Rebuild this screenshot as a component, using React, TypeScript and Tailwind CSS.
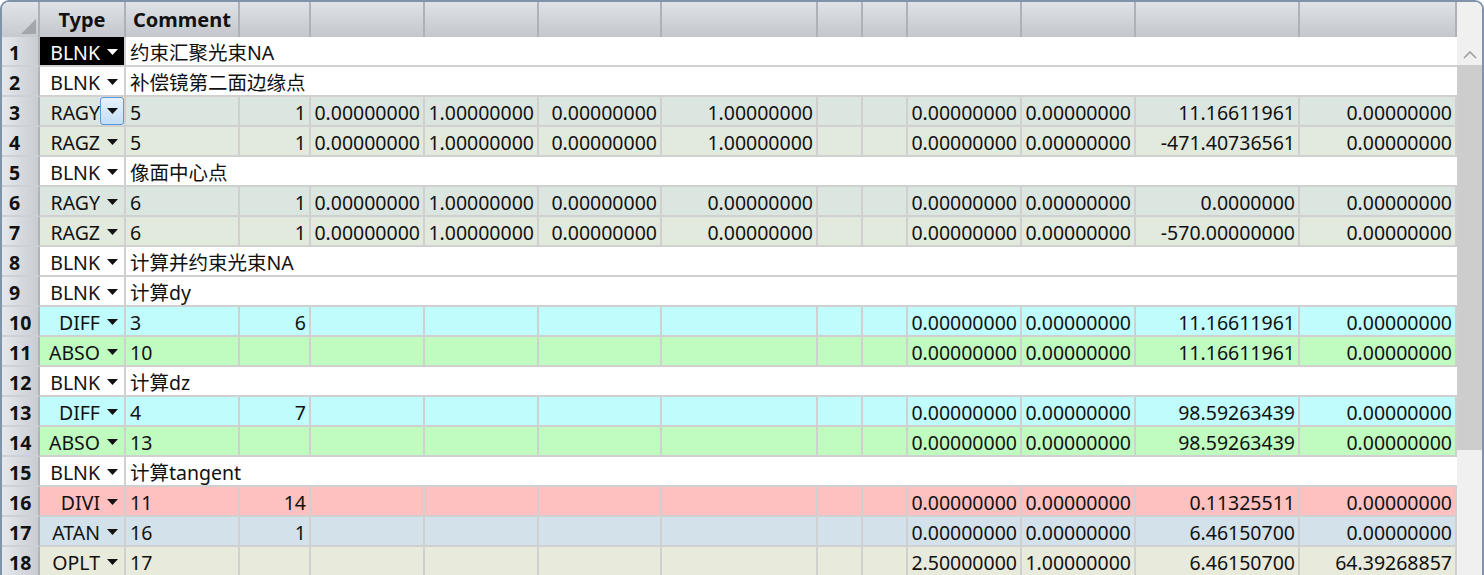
const widths = [
  "w-[114px]",
  "w-[71px]",
  "w-[114px]",
  "w-[114px]",
  "w-[123px]",
  "w-[156px]",
  "w-[45px]",
  "w-[45px]",
  "w-[114px]",
  "w-[114px]",
  "w-[164px]",
  "w-[157px]",
];

const rowBg: Record<string, string> = {
  BLNK: "bg-white",
  RAGY: "bg-[#dce6e0]",
  RAGZ: "bg-[#e2e9dd]",
  DIFF: "bg-[#c0fcfc]",
  ABSO: "bg-[#c0fcc0]",
  DIVI: "bg-[#ffc0c0]",
  ATAN: "bg-[#d3e2ea]",
  OPLT: "bg-[#e8eadb]",
};

const Z = "0.00000000";
const O = "1.00000000";

type Row = { type: string; comment?: string; cells?: string[] };

const rows: Row[] = [
  { type: "BLNK", comment: "约束汇聚光束NA" },
  { type: "BLNK", comment: "补偿镜第二面边缘点" },
  { type: "RAGY", cells: ["5", "1", Z, O, Z, O, "", "", Z, Z, "11.16611961", Z] },
  { type: "RAGZ", cells: ["5", "1", Z, O, Z, O, "", "", Z, Z, "-471.40736561", Z] },
  { type: "BLNK", comment: "像面中心点" },
  { type: "RAGY", cells: ["6", "1", Z, O, Z, Z, "", "", Z, Z, "0.0000000", Z] },
  { type: "RAGZ", cells: ["6", "1", Z, O, Z, Z, "", "", Z, Z, "-570.00000000", Z] },
  { type: "BLNK", comment: "计算并约束光束NA" },
  { type: "BLNK", comment: "计算dy" },
  { type: "DIFF", cells: ["3", "6", "", "", "", "", "", "", Z, Z, "11.16611961", Z] },
  { type: "ABSO", cells: ["10", "", "", "", "", "", "", "", Z, Z, "11.16611961", Z] },
  { type: "BLNK", comment: "计算dz" },
  { type: "DIFF", cells: ["4", "7", "", "", "", "", "", "", Z, Z, "98.59263439", Z] },
  { type: "ABSO", cells: ["13", "", "", "", "", "", "", "", Z, Z, "98.59263439", Z] },
  { type: "BLNK", comment: "计算tangent" },
  { type: "DIVI", cells: ["11", "14", "", "", "", "", "", "", Z, Z, "0.11325511", Z] },
  { type: "ATAN", cells: ["16", "1", "", "", "", "", "", "", Z, Z, "6.46150700", Z] },
  { type: "OPLT", cells: ["17", "", "", "", "", "", "", "", "2.50000000", O, "6.46150700", "64.39268857"] },
];

const Caret = ({ white }: { white?: boolean }) => (
  <svg width="11" height="6" viewBox="0 0 11 6">
    <path d="M0 0 L11 0 L5.5 6 Z" fill={white ? "#ffffff" : "#111111"} />
  </svg>
);

const HeaderRow = () => (
  <div className="flex h-[35px] shrink-0 font-bold text-[20px]">
    <div className="w-[38px] shrink-0 border-r-2 border-[#aeb2b8] bg-gradient-to-b from-[#e1e4e8] to-[#c6cad0] relative">
      <svg className="absolute left-0 top-0" width="38" height="35" viewBox="0 0 38 35">
        <path d="M34 17 L34 32 L19 32 Z" fill="#a3a7ac" />
      </svg>
    </div>
    <div className="w-[86px] shrink-0 border-r-2 border-[#aeb2b8] bg-gradient-to-b from-[#dfe2e6] to-[#c3c7cd] flex items-center justify-center">
      Type
    </div>
    {widths.map((w, i) => (
      <div
        key={i}
        className={`${w} shrink-0 border-r-2 border-[#aeb2b8] bg-gradient-to-b from-[#dfe2e6] to-[#c3c7cd] flex items-center justify-center`}
      >
        {i === 0 ? "Comment" : ""}
      </div>
    ))}
  </div>
);

const DataRow = ({ row, n }: { row: Row; n: number }) => {
  const bg = rowBg[row.type];
  const selected = n === 1;
  const focused = n === 3;
  return (
    <div className="flex h-[30px] shrink-0">
      <div className="w-[38px] shrink-0 border-r-2 border-b-2 border-r-[#b0b4ba] border-b-[#cdd0d4] bg-gradient-to-r from-[#e4e7eb] to-[#c9cdd3] flex items-center pl-[7px] pt-[4px] font-bold">
        {n}
      </div>
      <div
        className={`w-[86px] shrink-0 border-r-2 border-b-2 border-[#d0d0d0] flex items-center justify-end ${
          selected ? "bg-black text-white" : bg
        }`}
      >
        <span className="pt-[4px]">{row.type}</span>
        {focused ? (
          <div className="w-[24px] h-[28px] flex items-center justify-center rounded-[3px] border border-[#5b9bd5] bg-gradient-to-b from-[#e6f2fb] to-[#c3def5]">
            <Caret />
          </div>
        ) : (
          <div className="w-[24px] flex items-center justify-center pt-[2px]">
            <Caret white={selected} />
          </div>
        )}
      </div>
      {row.comment !== undefined ? (
        <div className="flex-1 border-b-2 border-[#d0d0d0] bg-white flex items-center pl-[4px] pt-[4px] whitespace-nowrap">
          {row.comment}
        </div>
      ) : (
        row.cells!.map((c, i) => (
          <div
            key={i}
            className={`${widths[i]} shrink-0 border-r-2 border-b-2 border-[#d0d0d0] ${bg} flex items-center pt-[4px] whitespace-nowrap ${
              i === 0 ? "justify-start pl-[4px]" : "justify-end pr-[3px]"
            }`}
          >
            {c}
          </div>
        ))
      )}
    </div>
  );
};

export default function App() {
  return (
    <div
      className="w-[1484px] h-[575px] overflow-hidden bg-white border-2 border-b-0 border-[#7f93aa] rounded-t-[9px] flex text-[19.5px] leading-[26px] text-[#111111]"
      style={{ fontFamily: '"Noto Sans", "Noto Sans CJK SC", sans-serif' }}
    >
      <div className="w-[1455px] shrink-0 flex flex-col">
        <HeaderRow />
        {rows.map((r, i) => (
          <DataRow key={i} row={r} n={i + 1} />
        ))}
      </div>
      <div className="flex-1 bg-[#f0f0f0] flex flex-col">
        <div className="h-[63px] shrink-0 flex items-end justify-center pb-[6px]">
          <svg width="14" height="8" viewBox="0 0 14 8">
            <path d="M1 7 L7 1 L13 7" fill="none" stroke="#a0a0a0" strokeWidth="1.6" />
          </svg>
        </div>
        <div className="h-[385px] shrink-0 bg-[#cdcdcd]" />
      </div>
    </div>
  );
}
